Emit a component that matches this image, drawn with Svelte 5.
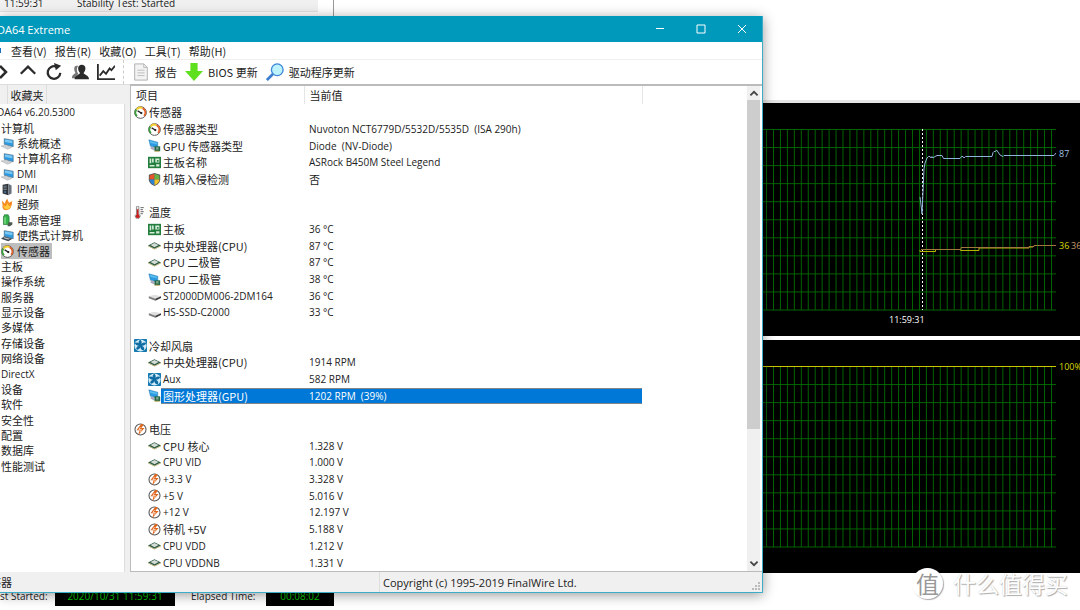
<script>
    const menu = ['查看(V)', '报告(R)', '收藏(O)', '工具(T)', '帮助(H)'];

    const tree = [
        { label: 'DA64 v6.20.5300', root: true },
        { label: '计算机' },
        { label: '系统概述', icon: 'pc' },
        { label: '计算机名称', icon: 'pc' },
        { label: 'DMI', icon: 'pc' },
        { label: 'IPMI', icon: 'server' },
        { label: '超频', icon: 'flame' },
        { label: '电源管理', icon: 'battery' },
        { label: '便携式计算机', icon: 'laptop' },
        { label: '传感器', icon: 'gauge' },
        { label: '主板' },
        { label: '操作系统' },
        { label: '服务器' },
        { label: '显示设备' },
        { label: '多媒体' },
        { label: '存储设备' },
        { label: '网络设备' },
        { label: 'DirectX' },
        { label: '设备' },
        { label: '软件' },
        { label: '安全性' },
        { label: '配置' },
        { label: '数据库' },
        { label: '性能测试' }
    ];

    const groups = [
        { title: '传感器', icon: 'gauge', rows: [
            ['gauge', '传感器类型', 'Nuvoton NCT6779D/5532D/5535D  (ISA 290h)'],
            ['gpu', 'GPU 传感器类型', 'Diode  (NV-Diode)'],
            ['board', '主板名称', 'ASRock B450M Steel Legend'],
            ['shield', '机箱入侵检测', '否']
        ] },
        { title: '温度', icon: 'thermo', rows: [
            ['board', '主板', '36 °C'],
            ['chip', '中央处理器(CPU)', '87 °C'],
            ['chip', 'CPU 二极管', '87 °C'],
            ['gpu', 'GPU 二极管', '38 °C'],
            ['disk', 'ST2000DM006-2DM164', '36 °C'],
            ['disk', 'HS-SSD-C2000', '33 °C']
        ] },
        { title: '冷却风扇', icon: 'fan', rows: [
            ['chip', '中央处理器(CPU)', '1914 RPM'],
            ['fan', 'Aux', '582 RPM'],
            ['gpu', '图形处理器(GPU)', '1202 RPM  (39%)']
        ] },
        { title: '电压', icon: 'volt', rows: [
            ['chip', 'CPU 核心', '1.328 V'],
            ['chip', 'CPU VID', '1.000 V'],
            ['volt', '+3.3 V', '3.328 V'],
            ['volt', '+5 V', '5.016 V'],
            ['volt', '+12 V', '12.197 V'],
            ['volt', '待机 +5V', '5.188 V'],
            ['chip', 'CPU VDD', '1.212 V'],
            ['chip', 'CPU VDDNB', '1.331 V']
        ] }
    ];

    let page = '传感器';
    let selected = '图形处理器(GPU)';

    const isLatin = text => !/[\u4e00-\u9fff]/.test(text);

    // graph grid, counted from the right edge
    const cols = Array.from({ length: 103 }, (_, i) => 1051.5 - i * 6.95);
    const lines = Array.from({ length: 11 }, (_, i) => 26.5 + i * 18.05);
</script>

{#snippet icon(name)}
    <svg class="icon" viewBox="0 0 16 16" aria-hidden="true">
        {#if name === 'gauge'}
            <circle cx="8" cy="8" r="7.2" fill="#fff" stroke="#555" stroke-width="1.2"/>
            <path d="M3.6 12.4A6 6 0 0 1 3.2 4.3" fill="none" stroke="#3aa03a" stroke-width="2.2"/>
            <path d="M3.2 4.3A6 6 0 0 1 10.5 2.6" fill="none" stroke="#f2cf2c" stroke-width="2.2"/>
            <path d="M10.5 2.6A6 6 0 0 1 12.4 12.2" fill="none" stroke="#e2622a" stroke-width="2.2"/>
            <path d="M4.5 6l5 3" stroke="#222" stroke-width="1.6"/>
            <circle cx="9" cy="8.7" r="1.4" fill="#222"/>
        {:else if name === 'pc' || name === 'laptop'}
            <path d="M4 2l11 2v8L4 9z" fill="#2e9be0" stroke="#4a6a80" stroke-width=".8"/>
            <path d="M5 3l9 1.7v3L5 6z" fill="#7cc8f4"/>
            {#if name === 'laptop'}
                <path d="M4 9l10 3-5 3-9-3z" fill="#3f4a55"/>
                <path d="M4 10l7 2-2 1-6-2z" fill="#c5ccd2"/>
            {:else}
                <path d="M0 11l7-1 6 3-5 2z" fill="#cfd3d6" stroke="#999" stroke-width=".5"/>
            {/if}
        {:else if name === 'server'}
            <path d="M2 2l7-1v14l-7-2z" fill="#30353c"/>
            <path d="M9 1l4 2v10l-4 2z" fill="#69727d"/>
            <path d="M3 4h4M3 6h4M3 8h4" stroke="#9da8b4" stroke-width=".8"/>
            <circle cx="5" cy="11" r="1" fill="#57a8f5"/>
        {:else if name === 'flame'}
            <path d="M1 3c2 2 3 3 4 4 0-2 1-5 3-6 0 2 1 3 2 5 1-1 3-2 4-2-1 2 0 3-1 5-1 4-3 6-7 6-3 0-5-3-4-6z" fill="#f58a1f"/>
            <path d="M3 9l3 1 2-4 2 4 2-1c0 3-2 5-5 5-2 0-4-2-4-5z" fill="#ffc93c"/>
        {:else if name === 'battery'}
            <path d="M4 1h5v2h1v10H3V3h1z" fill="#35b34a" stroke="#1d7030" stroke-width=".8"/>
            <path d="M5 4v8" stroke="#8be08f" stroke-width="1.5"/>
            <path d="M9 10h5v3l-3 2H8z" fill="#4d5a50"/>
        {:else if name === 'gpu'}
            <path d="M1 1l11 3v7L3 9z" fill="#2b9ae0" stroke="#287db3" stroke-width=".6"/>
            <path d="M2 2l9 2.5v2L3 5z" fill="#5bbdf0"/>
            <path d="M4 9l4 1v4l-5-2z" fill="#aab"/>
            <path d="M8 9h7v6H8z" fill="#21644b"/>
            <path d="M10 10h3v3h-3z" fill="#83a889"/>
            <path d="M8 15h6" stroke="#c2a13c"/>
        {:else if name === 'board'}
            <path d="M0 1h16v14H0z" fill="#237d3d"/>
            <path d="M2 3h2v6H2zM5 3h2v5H5zM2 11h6v2H2zM9 3h5v5H9zM10 10h4v3h-4z" fill="#d6eeda"/>
            <path d="M11 5h2v2h-2z" fill="#237d3d"/>
        {:else if name === 'shield'}
            <path d="M8 0L1 2v6c0 4 4 7 7 8 3-1 7-4 7-8V2z" fill="#555"/>
            <path d="M8 1L2 3v5h6z" fill="#e8542a"/>
            <path d="M8 1l6 2v5H8z" fill="#67b346"/>
            <path d="M2 8h6v7C5 14 2 11 2 8z" fill="#2b83d6"/>
            <path d="M8 8h6c0 3-3 6-6 7z" fill="#f5c329"/>
        {:else if name === 'thermo'}
            <path d="M3 1.5a1.5 1.5 0 0 1 3 0V10a3 3 0 1 1-3 0z" fill="#eee" stroke="#555" stroke-width=".8"/>
            <path d="M4.5 4v8" stroke="#c81e1e" stroke-width="2"/>
            <circle cx="4.5" cy="12.5" r="2.4" fill="#c81e1e"/>
            <path d="M8 2h4M8 4.5h3M8 7h4M8 9.5h3" stroke="#444"/>
        {:else if name === 'chip'}
            <path d="M0 8l8-4 8 4-8 4z" fill="#2d5b46"/>
            <path d="M0 8l8 4 8-4v1l-8 4-8-4z" fill="#b2a25c"/>
            <path d="M3 7.5l5-2.5 5 2.5-5 2.5z" fill="#d5dcd5"/>
        {:else if name === 'disk'}
            <path d="M1 9l7-2 8 2-7 3z" fill="#e0e0e0"/>
            <path d="M1 9l8 3v2.5l-8-3z" fill="#7d7d7d"/>
            <path d="M9 12l7-3v2l-7 3.5z" fill="#3a3a3a"/>
        {:else if name === 'fan'}
            <rect width="16" height="16" rx="1" fill="#1479b0"/>
            <circle cx="8" cy="8" r="7.5" fill="#d3ebf6"/>
            <path d="M8 8C5 6 5 2 8 1c2 2 2 5 0 7c1-3 4-5 7-3c-1 3-4 4-7 3c3 0 6 3 4 6c-3 0-5-3-4-6c0 3-2 6-5 5c-1-3 2-5 5-5c-3 1-6 0-7-3c3-2 6 0 7 3z" fill="#0f6da3"/>
        {:else if name === 'volt'}
            <circle cx="8" cy="8" r="6.8" fill="#fff" stroke="#555" stroke-width="1.3"/>
            <path d="M9 1L3 9h4l-2 6 8-9H9l3-4z" fill="#e0661c"/>
            <path d="M8 5l-2 3h3l-1 3" fill="none" stroke="#fff" stroke-width=".8"/>
        {/if}
    </svg>
{/snippet}

{#snippet grid()}
    <g class="grid">
        {#each cols as x}<path d="M{x} 26V207"/>{/each}
        {#each lines as y}<path d="M334 {y}H1056"/>{/each}
    </g>
{/snippet}

<main class="desktop">
    <section class="monitor">
        <div class="log">
            <div class="log-list">
                <div class="log-row"><span class="time">11:59:31</span><span>Stability Test: Started</span></div>
            </div>
        </div>

        <div class="graphs">
            <svg class="graph" viewBox="334 0 746 233" preserveAspectRatio="xMaxYMin slice">
                {@render grid()}
                <path class="marker" d="M922.5 26V207"/>
                <path class="cpu" d="M920 94L921.5 106L922 111L923 88L924 66L925 60L927 55L928.5 53.5L930 53.5L931 55L932 53.5L933 55L935 53.5L937 52.5H942L943.5 55.5H960L961.5 53.5L963 53.5L964 55L965.5 53.5H992L993 49.5L994 48.5L995.5 48.5L996.5 47L998 49L1000 52L1003 53.5L1004 52.5H1054L1056 50"/>
                <path class="disk" d="M920 147v1.5h15.5v-2h25v1h18.5v-2.5h50v-1h4"/>
                <path class="mb" d="M921 146.5h40v-2h68v-1h5v-1h22"/>
                <text class="cpu-text" x="1059" y="54">87</text>
                <text class="disk-text" x="1059" y="146">36</text>
                <text class="mb-text" x="1071" y="146">36</text>
                <text class="time-text" x="889" y="220">11:59:31</text>
            </svg>
            <svg class="graph" viewBox="334 0 746 233" preserveAspectRatio="xMaxYMin slice">
                {@render grid()}
                <path class="usage" d="M334 26.5H1056"/>
                <text class="disk-text" x="1059" y="30">100%</text>
            </svg>
        </div>

        <footer class="stats">
            <span class="started">st Started:</span>
            <output class="led wide">2020/10/31 11:59:31</output>
            <span class="elapsed">Elapsed Time:</span>
            <output class="led">00:08:02</output>
        </footer>
    </section>

    <section class="window">
        <header class="titlebar">
            <h1>DA64 Extreme</h1>
            <button aria-label="最小化"><svg viewBox="0 0 10 10"><path d="M1 4.5h8"/></svg></button>
            <button aria-label="最大化"><svg viewBox="0 0 10 10"><path d="M1 1h8v8H1z"/></svg></button>
            <button aria-label="关闭"><svg viewBox="0 0 10 10"><path d="M1 1l8 8M9 1L1 9"/></svg></button>
        </header>

        <nav class="menu">
            <i class="dot"></i>
            {#each menu as item}
                <button>{item}</button>
            {/each}
        </nav>

        <div class="toolbar">
            <button class="forward" aria-label="前进"><svg viewBox="0 0 11 20"><path d="M0 4l6 6-6 6"/></svg></button>
            <button aria-label="向上"><svg viewBox="0 0 20 20"><path d="M2 12l8-8 8 8"/></svg></button>
            <button aria-label="刷新"><svg viewBox="0 0 20 20"><path d="M12.5 4A7 7 0 1 0 17 11"/><path class="fill" d="M10 0l8 3-6 5z"/></svg></button>
            <button aria-label="用户">
                <svg viewBox="0 0 20 20">
                    <path class="fill pale" d="M6 3c-3 0-3 5-1 8-2 2-4 2-4 6h4c0-3 3-4 3-5-2-3-2-7 0-9z"/>
                    <path class="fill" d="M12 2c-5 0-5 6-2 9 0 2-6 2-6 7h16c0-5-6-5-6-7 3-3 3-9-2-9z"/>
                </svg>
            </button>
            <button aria-label="图表"><svg viewBox="0 0 20 20"><path class="thin" d="M1 1v17h19"/><path class="thin" d="M3 14l4-5 3 3 4-6 2 2 4-5"/></svg></button>
            <i class="separator"></i>
            <button class="labelled">
                <svg viewBox="0 0 20 20"><path d="M3 1h10l4 4v14H3z" fill="#f3f3f3" stroke="#aaa" stroke-width="1"/><path d="M13 1v4h4M6 8h8M6 11h8M6 14h8" stroke="#b8b8b8" stroke-width="1"/></svg>
                报告
            </button>
            <button class="labelled">
                <svg viewBox="0 0 20 20"><path d="M6 0h8v9h6L10 20 0 9h6z" fill="#5fe01f" stroke="none"/></svg>
                BIOS 更新
            </button>
            <button class="labelled">
                <svg viewBox="0 0 20 20"><path d="M8 12l-7 7" stroke="#3d7fd0" stroke-width="3"/><circle cx="12.5" cy="7.5" r="6.5" fill="#bdf3fd" stroke="#3d86d8" stroke-width="1.5"/></svg>
                驱动程序更新
            </button>
        </div>

        <div class="body">
            <aside>
                <div class="tabs"><button>收藏夹</button></div>
                <div class="tree">
                    <ul>
                        {#each tree as item}
                            <li class:root={item.root}>
                                <button class:active={item.label === page} on:click={() => page = item.label}>
                                    {#if item.icon}{@render icon(item.icon)}{/if}
                                    <span class:latin={isLatin(item.label)}>{item.label}</span>
                                </button>
                            </li>
                        {/each}
                    </ul>
                </div>
            </aside>

            <div class="list">
                <table>
                    <colgroup><col class="name-col"><col class="value-col"><col></colgroup>
                    <thead>
                        <tr><th>项目</th><th>当前值</th><th></th></tr>
                    </thead>
                    <tbody>
                        {#each groups as group, i}
                            {#if i}<tr><td colspan="3">&nbsp;</td></tr>{/if}
                            <tr>
                                <td><div class="name title">{@render icon(group.icon)}<span>{group.title}</span></div></td>
                                <td></td><td></td>
                            </tr>
                            {#each group.rows as [glyph, label, value]}
                                <tr class:selected={label === selected} on:click={() => selected = label}>
                                    <td><div class="name">{@render icon(glyph)}<span class:latin={isLatin(label)}>{label}</span></div></td>
                                    <td><div class="value" class:latin={isLatin(value)}>{value}</div></td>
                                    <td></td>
                                </tr>
                            {/each}
                        {/each}
                    </tbody>
                </table>
                <div class="scrollbar">
                    <button aria-label="向上滚动"><svg viewBox="0 0 10 10"><path d="M2 7l3-3 3 3"/></svg></button>
                    <div class="track"><div class="thumb"></div></div>
                    <button aria-label="向下滚动"><svg viewBox="0 0 10 10"><path d="M2 3l3 3 3-3"/></svg></button>
                </div>
            </div>
        </div>

        <footer class="status">
            <div class="path"><span>传感器</span></div>
            <div class="copy">Copyright (c) 1995-2019 FinalWire Ltd.</div>
            <svg class="grip" viewBox="0 0 9 9"><path d="M6 0h2v2H6zM3 3h2v2H3zM6 3h2v2H6zM0 6h2v2H0zM3 6h2v2H3zM6 6h2v2H6z"/></svg>
        </footer>
    </section>

    <div class="watermark"><b>值</b><span>什么值得买</span></div>
</main>

<style>
    :global(body) {
        margin: 0;
    }

    .desktop {
        position: relative;
        height: 100vh;
        min-height: 610px;
        overflow: hidden;
        background: #fff;
        color: #222;
        font: 11px/16px "Noto Sans CJK SC", "Open Sans", sans-serif;
    }

    button {
        padding: 0;
        border: 0;
        background: none;
        color: inherit;
        font: inherit;
        white-space: nowrap;
    }

    svg {
        display: block;
        flex: none;
    }

    .latin,
    .log,
    .stats {
        font-family: "Open Sans", sans-serif;
        font-size: 10px;
    }

    /* stability test window */
    .log {
        height: 100px;
        border-bottom: 3px solid #e4e4e4;
    }

    .log-list {
        box-sizing: border-box;
        width: 334px;
        height: 100%;
        border-right: 1px solid #999;
        overflow: hidden;
    }

    .log-row {
        display: flex;
        width: 318px;
        margin-top: -5px;
        background: #f0f0f0;
        border-bottom: 1px solid #e2e2e2;
    }

    .time {
        width: 73px;
        padding-left: 4px;
    }

    .graphs {
        display: flex;
        flex-direction: column;
        gap: 4px;
        margin-left: 334px;
        background: #fff;
    }

    .graph {
        width: 100%;
        height: 233px;
        background: #000;
        fill: none;
        font-family: "Open Sans", sans-serif;
        font-size: 9px;
    }

    .grid {
        stroke: #006400;
    }

    .marker {
        stroke: #fff;
        stroke-dasharray: 2 2;
    }

    .cpu {
        stroke: #8fb4d8;
    }

    .disk {
        stroke: #b4b400;
    }

    .mb {
        stroke: #a0783c;
    }

    .usage {
        stroke: #c8c800;
    }

    .cpu-text {
        fill: #9fc0e4;
    }

    .disk-text {
        fill: #d8d800;
    }

    .mb-text {
        fill: #c89a68;
    }

    .time-text {
        fill: #fff;
    }

    .stats {
        display: flex;
        padding-top: 13px;
        line-height: 20px;
    }

    .started {
        width: 55px;
    }

    .elapsed {
        width: 75px;
        padding-left: 16px;
    }

    .led {
        width: 68px;
        background: #000;
        color: #0c0;
        text-align: center;
    }

    .led.wide {
        width: 120px;
    }

    /* main window */
    .window {
        position: absolute;
        top: 16px;
        bottom: 17px;
        left: 0;
        width: 70.6%;
        display: flex;
        flex-direction: column;
        background: #fff;
        border-right: 1px solid #3badc8;
        border-bottom: 1px solid #3badc8;
        box-shadow: 0 2px 12px #0006;
    }

    .titlebar {
        display: flex;
        height: 26px;
        background: #0099bc;
        color: #fff;
    }

    h1 {
        flex: 1;
        margin: 0 0 0 -3px;
        font: 400 11px/27px "Open Sans", sans-serif;
    }

    .titlebar button {
        width: 41px;
        display: grid;
        place-items: center;
    }

    .titlebar svg {
        width: 10px;
        height: 10px;
        fill: none;
        stroke: #fff;
    }

    .menu {
        display: flex;
        align-items: center;
        gap: 8px;
        height: 17px;
        border-bottom: 1px solid #eee;
    }

    .dot {
        width: 1px;
        height: 5px;
        margin-right: 2px;
        background: #1b6fc0;
    }

    .toolbar {
        display: flex;
        align-items: center;
        gap: 8px;
        height: 24px;
    }

    .toolbar svg {
        width: 18px;
        height: 18px;
        fill: none;
        stroke: #2b2b2b;
        stroke-width: 2.5;
    }

    .toolbar .forward svg {
        width: 11px;
        height: 20px;
    }

    .toolbar .fill {
        fill: #2b2b2b;
        stroke: none;
    }

    .toolbar .pale {
        fill: #777;
    }

    .toolbar .thin {
        stroke-width: 2;
    }

    .separator {
        align-self: stretch;
        border-left: 1px dashed #ccc;
    }

    .labelled {
        display: flex;
        align-items: center;
        gap: 5px;
    }

    .body {
        flex: 1;
        display: flex;
        min-height: 0;
        background: #f0f0f0;
    }

    aside {
        width: 130px;
        display: flex;
        flex-direction: column;
    }

    .tabs {
        display: flex;
        height: 20px;
        padding-left: 7px;
        border-top: 1px solid #ddd;
        box-sizing: border-box;
    }

    .tabs button {
        width: 40px;
        border-right: 1px solid #ddd;
        border-left: 1px solid #ddd;
    }

    .tree {
        flex: 1;
        width: 124px;
        padding-top: 1px;
        background: #fff;
        border-right: 1px solid #ddd;
    }

    ul {
        display: flex;
        flex-direction: column;
        height: 79%;
        margin: 0;
        padding: 0;
        list-style: none;
    }

    li {
        flex: 1;
        display: flex;
        min-height: 0;
        padding-left: 1px;
    }

    .root {
        margin-left: -4px;
    }

    .tree button {
        display: flex;
        align-items: center;
        gap: 3px;
        line-height: 15px;
    }

    .tree .active {
        padding-right: 2px;
        background: #bdbdbd;
    }

    .icon {
        width: 13px;
        height: 13px;
    }

    .list {
        flex: 1;
        display: flex;
        background: #fff;
        border: 2px solid #bbb;
        border-width: 2px 0 1px 1px;
    }

    table {
        flex: 1;
        height: 100%;
        border-collapse: collapse;
        table-layout: fixed;
    }

    .name-col {
        width: 173px;
    }

    .value-col {
        width: 338px;
    }

    th,
    td {
        padding: 0;
        text-align: left;
        font-weight: 400;
        white-space: pre;
    }

    th {
        height: 18px;
        padding-left: 5px;
        border-right: 1px solid #e5e5e5;
    }

    th:last-child {
        border-right: 0;
    }

    .name {
        display: flex;
        align-items: center;
        padding-left: 17px;
    }

    .name.title {
        padding-left: 3px;
    }

    .name span {
        flex: 1;
        padding-left: 2px;
    }

    .value {
        padding-left: 5px;
    }

    .selected span,
    .selected .value {
        background: #0078d7;
        color: #fff;
        box-shadow: inset 0 1px #7f8790, inset 0 -1px #7f8790;
    }

    .scrollbar {
        width: 13px;
        display: flex;
        flex-direction: column;
        margin-right: 2px;
        background: #f0f0f0;
    }

    .scrollbar button {
        height: 14px;
        display: grid;
        place-items: center;
    }

    .scrollbar svg {
        width: 12px;
        height: 12px;
        fill: none;
        stroke: #444;
        stroke-width: 1.5;
    }

    .track {
        flex: 1;
    }

    .thumb {
        height: 72%;
        background: #cdcdcd;
    }

    .status {
        display: flex;
        height: 20px;
        background: #f0f0f0;
        font-family: "Open Sans", "Noto Sans CJK SC", sans-serif;
        line-height: 21px;
    }

    .path {
        box-sizing: border-box;
        width: 380px;
        border-right: 1px solid #ddd;
    }

    .path span {
        margin-left: -21px;
    }

    .copy {
        flex: 1;
        padding-left: 3px;
    }

    .grip {
        align-self: flex-end;
        width: 9px;
        height: 9px;
        margin: 1px;
        fill: #bbb;
    }

    .watermark {
        position: absolute;
        right: 12px;
        bottom: 11px;
        display: flex;
        align-items: center;
        gap: 10px;
        color: #fff;
        font-size: 23px;
        line-height: 32px;
        text-shadow: 1px 1px 1px #aaa, 0 0 1px #ccc;
    }

    .watermark b {
        width: 31px;
        height: 31px;
        border-radius: 50%;
        background: #fff;
        box-shadow: 1px 1px 1px #aaa;
        color: #999;
        text-align: center;
        text-shadow: none;
        line-height: 30px;
        font-size: 23px;
        font-weight: 400;
    }
</style>
